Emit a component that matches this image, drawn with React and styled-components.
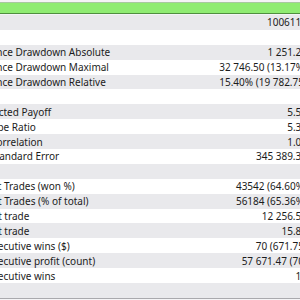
import React from 'react';
import styled, { createGlobalStyle } from 'styled-components';

const Global = createGlobalStyle`
  html, body {
    margin: 0;
    padding: 0;
    background: #ffffff;
  }
  body {
    width: 300px;
    height: 300px;
    overflow: hidden;
    font-family: 'Noto Sans', 'Open Sans', sans-serif;
  }
`;

const Window = styled.div`
  width: 300px;
  height: 300px;
  overflow: hidden;
  background: #f4f4f6;
  display: flex;
  flex-direction: column;
  align-items: flex-start;
`;

const ProgressBar = styled.div`
  align-self: stretch;
  height: 10px;
  margin-top: 2px;
  background: #8fec72;
  border-top: 1px solid #a8c8a0;
  border-bottom: 1px solid #4f8f3f;
`;

const Table = styled.div`
  margin-top: 1px;
  margin-left: -24px;
  width: 331px;
  flex-shrink: 0;
  display: flex;
  flex-direction: column;
  border-bottom: 1px solid #a9a9ad;
`;

const Row = styled.div`
  height: 14.9px;
  display: flex;
  align-items: center;
  background: ${p => (p.$shade ? '#e9e9ec' : '#ffffff')};
  color: #1c1c1c;
  font-size: 10px;
  line-height: 14px;
  white-space: nowrap;
`;

const Label = styled.div`
  flex: 1;
`;

const Value = styled.div`
  text-align: right;
`;

const rows = [
  ['', '1006117'],
  ['', ''],
  ['Balance Drawdown Absolute', '1 251.25'],
  ['Balance Drawdown Maximal', '32 746.50 (13.17%)'],
  ['Balance Drawdown Relative', '15.40% (19 782.75)'],
  ['', ''],
  ['Expected Payoff', '5.55'],
  ['Sharpe Ratio', '5.35'],
  ['LR Correlation', '1.00'],
  ['LR Standard Error', '345 389.35'],
  ['', ''],
  ['Short Trades (won %)', '43542 (64.60%)'],
  ['Profit Trades (% of total)', '56184 (65.36%)'],
  ['profit trade', '12 256.50'],
  ['profit trade', '15.85'],
  ['consecutive wins ($)', '70 (671.75)'],
  ['consecutive profit (count)', '57 671.47 (70)'],
  ['consecutive wins', '11'],
  ['', ''],
];

export default function App() {
  return (
    <Window>
      <Global />
      <ProgressBar />
      <Table>
        {rows.map(([label, value], i) => (
          <Row key={i} $shade={i % 2 === 0}>
            <Label>{label}</Label>
            <Value>{value}</Value>
          </Row>
        ))}
      </Table>
    </Window>
  );
}
